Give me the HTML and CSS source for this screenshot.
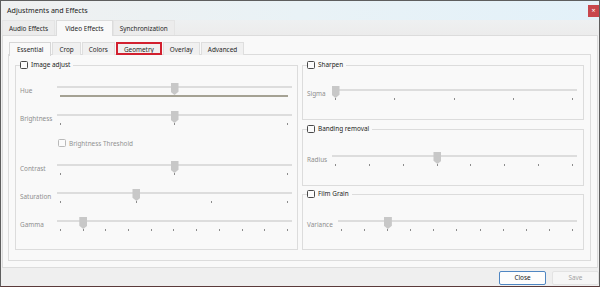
FILE: index.html
```html
<!DOCTYPE html>
<html>
<head>
<meta charset="utf-8">
<title>Adjustments and Effects</title>
<link rel="stylesheet" href="styles.css">
</head>
<body>
<div class="window">
  <div class="titlebar">
    <span class="title">Adjustments and Effects</span>
    <span class="close-x">×</span>
  </div>
  <div class="tabbar top">
    <div class="tab">Audio Effects</div>
    <div class="tab active">Video Effects</div>
    <div class="tab">Synchronization</div>
  </div>
  <div class="page outer">
    <div class="tabbar inner">
      <div class="tab active">Essential</div>
      <div class="tab">Crop</div>
      <div class="tab">Colors</div>
      <div class="tab marked">Geometry</div>
      <div class="tab">Overlay</div>
      <div class="tab">Advanced</div>
    </div>
    <div class="page inner">
      <div class="columns">
        <fieldset class="group main">
          <legend><span class="cb"></span>Image adjust</legend>
          <div class="row">
            <span class="lbl w37">Hue</span>
            <div class="slider">
              <div class="track"></div>
              <div class="huebar"></div>
              <div class="rail"><span class="handle" style="left:50%"></span></div>
            </div>
          </div>
          <div class="row">
            <span class="lbl w37">Brightness</span>
            <div class="slider">
              <div class="track"></div>
              <div class="ticks"><i></i><i></i><i></i></div>
              <div class="rail"><span class="handle" style="left:50%"></span></div>
            </div>
          </div>
          <div class="check-row">
            <span class="cb disabled"></span><span>Brightness Threshold</span>
          </div>
          <div class="row">
            <span class="lbl w37">Contrast</span>
            <div class="slider">
              <div class="track"></div>
              <div class="ticks"><i></i><i></i><i></i></div>
              <div class="rail"><span class="handle" style="left:50%"></span></div>
            </div>
          </div>
          <div class="row">
            <span class="lbl w37">Saturation</span>
            <div class="slider">
              <div class="track"></div>
              <div class="ticks"><i></i><i></i><i></i><i></i></div>
              <div class="rail"><span class="handle" style="left:33.333%"></span></div>
            </div>
          </div>
          <div class="row">
            <span class="lbl w37">Gamma</span>
            <div class="slider">
              <div class="track"></div>
              <div class="ticks"><i></i><i></i><i></i><i></i><i></i><i></i><i></i><i></i><i></i><i></i><i></i></div>
              <div class="rail"><span class="handle" style="left:10%"></span></div>
            </div>
          </div>
        </fieldset>
        <div class="side">
          <fieldset class="group sharpen">
            <legend><span class="cb"></span>Sharpen</legend>
            <div class="row">
              <span class="lbl w25">Sigma</span>
              <div class="slider">
                <div class="track"></div>
                <div class="ticks"><i></i><i></i><i></i><i></i><i></i></div>
                <div class="rail"><span class="handle" style="left:0%"></span></div>
              </div>
            </div>
          </fieldset>
          <fieldset class="group banding">
            <legend><span class="cb"></span>Banding removal</legend>
            <div class="row">
              <span class="lbl w25">Radius</span>
              <div class="slider">
                <div class="track"></div>
                <div class="ticks"><i></i><i></i><i></i><i></i><i></i><i></i><i></i><i></i></div>
                <div class="rail"><span class="handle" style="left:42.857%"></span></div>
              </div>
            </div>
          </fieldset>
          <fieldset class="group grain">
            <legend><span class="cb"></span>Film Grain</legend>
            <div class="row">
              <span class="lbl w31">Variance</span>
              <div class="slider">
                <div class="track"></div>
                <div class="ticks"><i></i><i></i><i></i><i></i><i></i><i></i><i></i><i></i><i></i><i></i><i></i></div>
                <div class="rail"><span class="handle" style="left:20%"></span></div>
              </div>
            </div>
          </fieldset>
        </div>
      </div>
    </div>
  </div>
  <div class="footer">
    <button class="btn primary">Close</button>
    <button class="btn disabled">Save</button>
  </div>
</div>
</body>
</html>
```

FILE: styles.css
```css
* { box-sizing: border-box; }
html, body {
  margin: 0;
  padding: 0;
  width: 600px;
  height: 287px;
  overflow: hidden;
  background: #5c5c5c;
}
body {
  font-family: "Noto Sans", "Open Sans", sans-serif;
  font-size: 6.4px;
  color: #262626;
}
.window {
  width: 600px;
  height: 287px;
  border: 1px solid #5e5e5e;
  border-bottom-color: #5a3a3a;
  background: #f0f0f0;
  display: flex;
  flex-direction: column;
}
.titlebar {
  height: 19px;
  flex: none;
  display: flex;
  align-items: flex-start;
  justify-content: space-between;
  padding-left: 6px;
  background: linear-gradient(to right, #eff0f0 0%, #e9f2f6 50%, #e3f1f9 100%);
}
.title {
  font-size: 7.1px;
  line-height: 19px;
  color: #1b1b1b;
}
.close-x {
  width: 11px;
  height: 12px;
  margin-top: 4px;
  background: #c7464c;
  color: #fff;
  font-size: 7px;
  line-height: 12px;
  text-align: center;
}
.tabbar {
  display: flex;
  flex: none;
  position: relative;
  z-index: 1;
}
.tabbar.top {
  height: 15px;
  padding-left: 1px;
  background: linear-gradient(to bottom, #eef0f1, #ececec);
}
.tab {
  padding: 0 6px;
  white-space: nowrap;
  border: 1px solid #e1e1e1;
  border-bottom: none;
  display: flex;
  align-items: center;
  color: #262626;
}
.tabbar.top .tab {
  height: 15px;
  background: #ececec;
  border-color: #e4e4e4;
}
.tabbar.top .tab.active {
  height: 16px;
  padding: 0 8px;
  background: #f9f9f9;
  border-color: #dcdcdc;
  margin-left: 1px;
}
.page {
  background: #f9f9f9;
  border: 1px solid #dcdcdc;
}
.page.outer {
  margin: 0 1px;
  height: 233px;
  flex: none;
  padding: 6px 6px 6px 5px;
  display: flex;
  flex-direction: column;
}
.tabbar.inner {
  height: 13px;
  padding-left: 1px;
  margin-bottom: -1px;
}
.tabbar.inner .tab {
  height: 13px;
  padding: 0 6px;
  background: #f0f0f0;
  border-color: #dedede;
  margin-right: 1px;
}
.tabbar.inner .tab.active {
  background: #f9f9f9;
  height: 14px;
  padding: 0 7px;
  border-color: #d6d6d6;
}
.tabbar.inner .tab.marked {
  padding: 0 7px;
  outline: 2px solid #d2202f;
  outline-offset: -2px;
}
.page.inner {
  flex: 1;
  padding: 5px 6px 9px 6px;
}
.columns {
  display: flex;
  gap: 4px;
  align-items: flex-start;
}
.side {
  flex: 1 1 0;
  min-width: 0;
  display: flex;
  flex-direction: column;
}
fieldset.group {
  margin: 0;
  min-width: 0;
  border: 1px solid #dcdcdc;
}
fieldset.main {
  flex: none;
  width: 283px;
  padding: 12px 5px 17px 4px;
}
fieldset.sharpen { padding: 15px 6px 18px 4px; }
fieldset.banding { padding: 17px 6px 18px 4px; margin-top: 4px; }
fieldset.grain { padding: 17px 6px 17px 4px; margin-top: 3px; }
legend {
  padding: 0 3px 0 0;
  height: 10px;
  line-height: 10px;
  display: flex;
  align-items: center;
  gap: 3px;
  color: #222;
}
.cb {
  width: 8px;
  height: 8px;
  border: 1px solid #4a4a4a;
  border-radius: 1.5px;
  background: #fbfbfb;
  flex: none;
}
.cb.disabled {
  border-color: #b9b9b9;
}
.row {
  display: flex;
  align-items: flex-start;
  margin-bottom: 12px;
}
.row:last-child { margin-bottom: 0; }
.lbl {
  flex: none;
  margin-top: 4px;
  line-height: 10px;
  color: #8e8e8e;
  white-space: nowrap;
}
.w37 { width: 37px; }
.w25 { width: 25px; }
.w31 { width: 31px; }
.check-row {
  display: flex;
  align-items: center;
  gap: 3px;
  height: 10px;
  margin: 0 0 12px 38px;
  color: #929292;
}
.slider {
  position: relative;
  flex: 1;
  height: 16px;
  padding-top: 4px;
}
.track {
  height: 2px;
  background: #dddddd;
}
.ticks {
  display: flex;
  justify-content: space-between;
  margin: 7px 4px 0 3px;
}
.ticks i {
  width: 1px;
  height: 2px;
  background: #8c8c8c;
}
.huebar {
  height: 2px;
  margin: 7px 4px 0 3px;
  background: #a5a294;
}
.rail {
  position: absolute;
  top: 0;
  left: 3px;
  right: 4px;
  height: 0;
}
.handle {
  position: absolute;
  top: 1px;
  width: 8px;
  height: 12px;
  margin-left: -3.5px;
  background: #c8c8c8;
  clip-path: polygon(0 0, 100% 0, 100% 72%, 50% 100%, 0 72%);
}
.footer {
  flex: 1;
  display: flex;
  justify-content: flex-end;
  align-items: flex-start;
  gap: 6px;
  padding-top: 3px;
  background: #efefef;
}
.btn {
  width: 47px;
  height: 14px;
  padding: 0;
  font-family: "Noto Sans", "Open Sans", sans-serif;
  font-size: 6.4px;
  line-height: 12px;
  border-radius: 2px;
}
.btn.primary {
  border: 1px solid #4f86c2;
  background: #fdfdfd;
  color: #1a1a1a;
}
.btn.disabled {
  border: 1px solid #e3e3e3;
  background: #f6f6f6;
  color: #a2a2a2;
}
```
